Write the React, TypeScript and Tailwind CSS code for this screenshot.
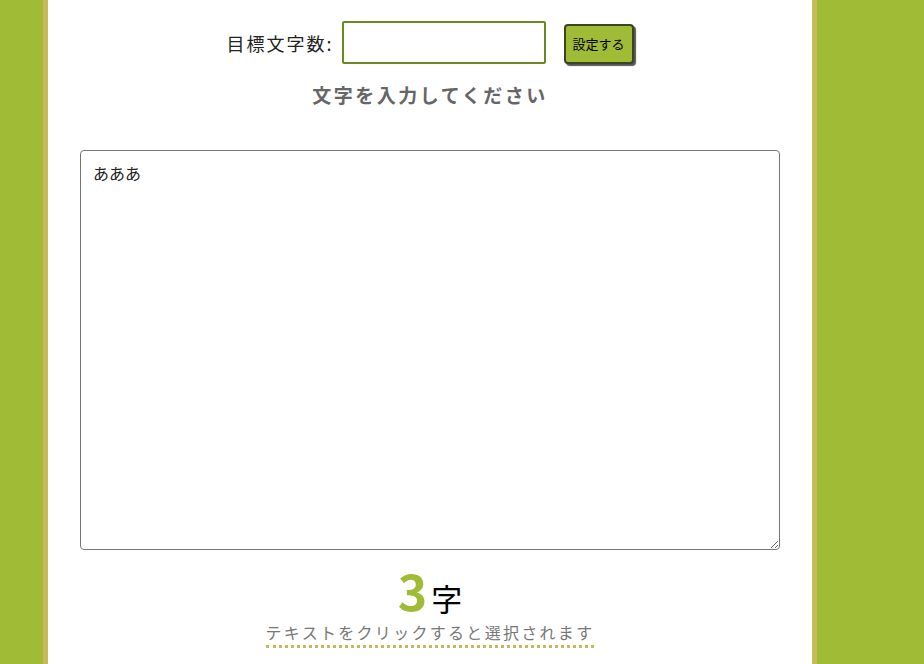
import React, { useState } from "react";

const App = () => {
  const [target, setTarget] = useState("");
  const [text, setText] = useState("あああ");

  return (
    <div
      className="min-h-screen bg-[#a0bb36]"
      style={{ fontFamily: '"Noto Sans CJK JP", "Noto Sans", sans-serif' }}
    >
      <div className="ml-[43px] w-[774px] min-h-[664px] border-x-[5px] border-[#c4bb58] bg-white flex flex-col items-center pt-[21px]">
        <div className="flex items-center">
          <label className="text-[18px] text-[#222] tracking-[2px] mr-[8px] mt-[1px]">目標文字数:</label>
          <input
            type="text"
            value={target}
            onChange={(e) => setTarget(e.target.value)}
            className="w-[204px] h-[43px] border-2 border-[#6b8a1e] rounded-[2px] outline-none px-2"
          />
          <button
            type="button"
            className="ml-[18px] mt-[3px] w-[70px] h-[40px] bg-[#a0bb36] border-2 border-[#3c4420] rounded-[4px] text-[13px] text-black shadow-[2px_2px_1px_#555]"
          >
            設定する
          </button>
        </div>
        <h2 className="mt-[17px] text-[19px] font-bold text-[#666] tracking-[2.5px]">
          文字を入力してください
        </h2>
        <textarea
          value={text}
          onChange={(e) => setText(e.target.value)}
          className="mt-[40px] w-[700px] h-[400px] border border-[#767676] rounded-[4px] px-[12px] py-[10px] text-[16px] text-[#222] outline-none"
        />
        <div className="mt-[14px] flex items-baseline">
          <span className="text-[50px] font-bold text-[#a0bb36] leading-none">
            {text.length}
          </span>
          <span className="text-[31px] text-black leading-none ml-[4px]">字</span>
        </div>
        <p className="mt-[7px] text-[16px] text-[#777] tracking-[2.3px] border-b-[3px] border-dotted border-[#c4bb58] leading-[22px] pb-[2px]">
          テキストをクリックすると選択されます
        </p>
      </div>
    </div>
  );
};

export default App;
